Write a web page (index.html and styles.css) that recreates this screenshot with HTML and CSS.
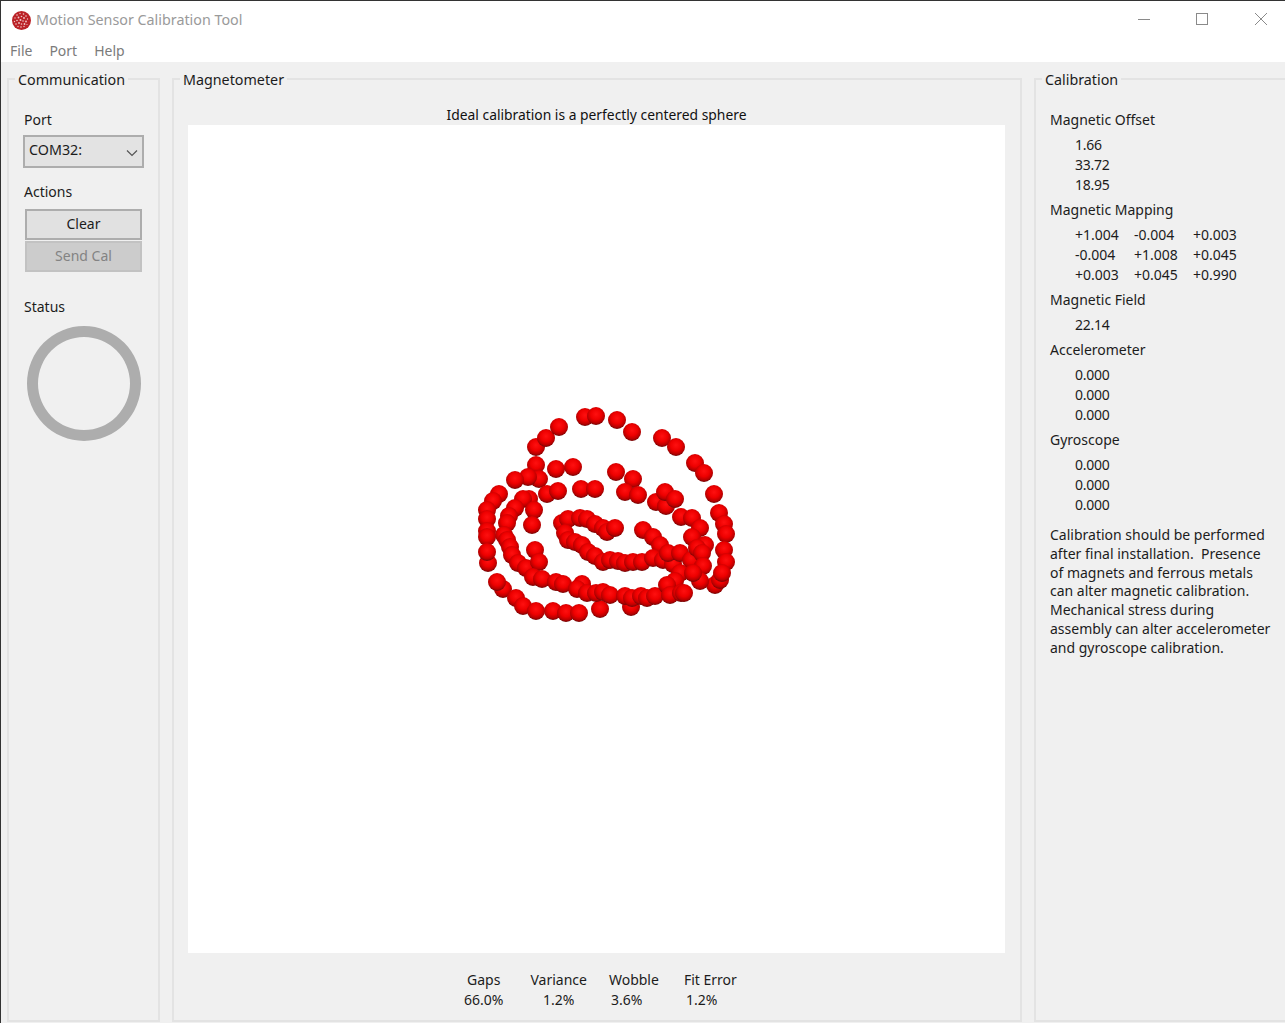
FILE: index.html
```html
<!DOCTYPE html>
<html lang="en">
<head>
<meta charset="utf-8">
<title>Motion Sensor Calibration Tool</title>
<link rel="stylesheet" href="styles.css">
</head>
<body>
<div class="window">
  <span class="edge-blue"></span>
  <span class="edge-red"></span>
  <header class="titlebar">
    <svg class="logo" width="21" height="21" viewBox="0 0 21 21">
      <circle cx="10.5" cy="10.5" r="9.5" fill="#bb2227"/>
      <g fill="#f0c8c8">
        <circle cx="6" cy="5" r=".8"/><circle cx="9" cy="3.5" r=".7"/><circle cx="12.5" cy="4" r=".8"/><circle cx="15" cy="6" r=".8"/>
        <circle cx="4" cy="8" r=".7"/><circle cx="7.5" cy="7.5" r=".9"/><circle cx="10.5" cy="6.5" r=".8"/><circle cx="13" cy="8" r=".9"/><circle cx="16.5" cy="9" r=".7"/>
        <circle cx="3.5" cy="11.5" r=".7"/><circle cx="6" cy="10.5" r=".8"/><circle cx="9.5" cy="10" r="1"/><circle cx="12" cy="11" r=".8"/><circle cx="15" cy="11.5" r=".9"/>
        <circle cx="5" cy="14" r=".8"/><circle cx="8" cy="13" r=".9"/><circle cx="10.5" cy="14" r=".8"/><circle cx="13.5" cy="14" r=".9"/><circle cx="16" cy="14.5" r=".6"/>
        <circle cx="7" cy="16.5" r=".7"/><circle cx="10" cy="17" r=".8"/><circle cx="13" cy="16.5" r=".7"/>
      </g>
    </svg>
    <span class="title">Motion Sensor Calibration Tool</span>
    <div class="controls">
      <svg class="ctl-min" width="14" height="14" viewBox="0 0 14 14"><path d="M1 7.5h12" stroke="#8a8a8a" fill="none"/></svg>
      <svg width="14" height="14" viewBox="0 0 14 14"><rect x="1.5" y="1.5" width="11" height="11" stroke="#8a8a8a" fill="none"/></svg>
      <svg width="14" height="14" viewBox="0 0 14 14"><path d="M1 1l12 12M13 1L1 13" stroke="#8a8a8a" fill="none"/></svg>
    </div>
  </header>
  <nav class="menubar"><span>File</span><span>Port</span><span>Help</span></nav>
  <main class="panels">
    <fieldset class="group group-comm">
      <legend>Communication</legend>
      <div class="label label-port">Port</div>
      <div class="select">COM32:
        <svg width="12" height="8" viewBox="0 0 12 8"><path d="M1 1.5l5 5 5-5" stroke="#555" stroke-width="1.2" fill="none"/></svg>
      </div>
      <div class="label label-actions">Actions</div>
      <button class="btn" type="button">Clear</button>
      <button class="btn btn-disabled" type="button">Send Cal</button>
      <div class="label label-status">Status</div>
      <div class="ring"></div>
    </fieldset>

    <fieldset class="group group-mag">
      <legend>Magnetometer</legend>
      <div class="caption">Ideal calibration is a perfectly centered sphere</div>
      <svg class="scene" width="817" height="828" viewBox="188 125 817 828">
        <defs>
          <radialGradient id="ball" cx="50%" cy="40%" r="60%">
            <stop offset="0" stop-color="#ff1010"/>
            <stop offset="0.5" stop-color="#ee0000"/>
            <stop offset="0.8" stop-color="#bb0000"/>
            <stop offset="0.96" stop-color="#800404"/>
            <stop offset="1" stop-color="#601010"/>
          </radialGradient>
          <circle id="d" r="9"/>
        </defs>
        <g fill="url(#ball)">
          <use href="#d" x="585" y="417"/><use href="#d" x="596" y="416"/><use href="#d" x="617" y="420"/><use href="#d" x="632" y="432"/>
          <use href="#d" x="536" y="447"/><use href="#d" x="546" y="438"/><use href="#d" x="559" y="427"/>
          <use href="#d" x="662" y="438"/><use href="#d" x="676" y="447"/><use href="#d" x="695" y="463"/><use href="#d" x="704" y="473"/>
          <use href="#d" x="536" y="465"/><use href="#d" x="556" y="469"/><use href="#d" x="573" y="467"/><use href="#d" x="616" y="472"/><use href="#d" x="633" y="479"/>
          <use href="#d" x="539" y="479"/><use href="#d" x="528" y="477"/><use href="#d" x="515" y="480"/>
          <use href="#d" x="547" y="494"/><use href="#d" x="558" y="491"/><use href="#d" x="581" y="489"/><use href="#d" x="595" y="489"/><use href="#d" x="625" y="492"/><use href="#d" x="638" y="495"/>
          <use href="#d" x="656" y="502"/><use href="#d" x="666" y="506"/><use href="#d" x="665" y="492"/><use href="#d" x="675" y="499"/><use href="#d" x="714" y="494"/>
          <use href="#d" x="499" y="494"/><use href="#d" x="493" y="501"/><use href="#d" x="487" y="510"/><use href="#d" x="487" y="519"/><use href="#d" x="487" y="531"/><use href="#d" x="487" y="537"/>
          <use href="#d" x="488" y="563"/><use href="#d" x="487" y="552"/>
          <use href="#d" x="529" y="499"/><use href="#d" x="523" y="499"/><use href="#d" x="515" y="508"/><use href="#d" x="509" y="516"/><use href="#d" x="507" y="523"/>
          <use href="#d" x="534" y="510"/><use href="#d" x="532" y="525"/>
          <use href="#d" x="504" y="535"/><use href="#d" x="507" y="540"/><use href="#d" x="510" y="547"/><use href="#d" x="512" y="555"/><use href="#d" x="518" y="563"/><use href="#d" x="526" y="568"/>
          <use href="#d" x="535" y="550"/><use href="#d" x="539" y="562"/><use href="#d" x="533" y="577"/><use href="#d" x="542" y="579"/><use href="#d" x="556" y="582"/><use href="#d" x="563" y="584"/>
          <use href="#d" x="503" y="589"/><use href="#d" x="497" y="582"/><use href="#d" x="516" y="598"/><use href="#d" x="523" y="606"/><use href="#d" x="536" y="611"/><use href="#d" x="553" y="611"/><use href="#d" x="566" y="613"/><use href="#d" x="579" y="613"/><use href="#d" x="600" y="609"/>
          <use href="#d" x="582" y="584"/><use href="#d" x="577" y="589"/><use href="#d" x="587" y="593"/><use href="#d" x="596" y="593"/><use href="#d" x="603" y="592"/><use href="#d" x="610" y="595"/>
          <use href="#d" x="631" y="607"/><use href="#d" x="625" y="596"/><use href="#d" x="632" y="598"/><use href="#d" x="641" y="596"/><use href="#d" x="647" y="598"/><use href="#d" x="655" y="596"/>
          <use href="#d" x="562" y="523"/><use href="#d" x="568" y="519"/><use href="#d" x="580" y="518"/><use href="#d" x="587" y="519"/><use href="#d" x="595" y="524"/><use href="#d" x="603" y="528"/><use href="#d" x="607" y="532"/><use href="#d" x="615" y="528"/>
          <use href="#d" x="565" y="533"/><use href="#d" x="568" y="540"/><use href="#d" x="575" y="542"/><use href="#d" x="582" y="545"/><use href="#d" x="588" y="552"/><use href="#d" x="595" y="556"/>
          <use href="#d" x="603" y="562"/><use href="#d" x="610" y="560"/><use href="#d" x="618" y="561"/><use href="#d" x="625" y="563"/><use href="#d" x="633" y="562"/><use href="#d" x="642" y="562"/>
          <use href="#d" x="643" y="530"/><use href="#d" x="653" y="537"/><use href="#d" x="660" y="545"/><use href="#d" x="653" y="558"/><use href="#d" x="663" y="560"/><use href="#d" x="673" y="564"/><use href="#d" x="668" y="553"/><use href="#d" x="680" y="553"/><use href="#d" x="691" y="560"/>
          <use href="#d" x="681" y="517"/><use href="#d" x="692" y="518"/><use href="#d" x="700" y="528"/><use href="#d" x="692" y="537"/><use href="#d" x="705" y="545"/><use href="#d" x="697" y="548"/><use href="#d" x="702" y="553"/>
          <use href="#d" x="719" y="513"/><use href="#d" x="724" y="524"/><use href="#d" x="726" y="534"/><use href="#d" x="724" y="550"/><use href="#d" x="726" y="562"/>
          <use href="#d" x="715" y="585"/><use href="#d" x="720" y="580"/><use href="#d" x="722" y="573"/><use href="#d" x="703" y="566"/>
          <use href="#d" x="680" y="573"/><use href="#d" x="700" y="581"/><use href="#d" x="693" y="573"/><use href="#d" x="675" y="581"/><use href="#d" x="667" y="585"/><use href="#d" x="670" y="595"/><use href="#d" x="681" y="593"/><use href="#d" x="684" y="593"/>
        </g>
      </svg>
      <div class="stats">
        <div class="stat stat-gaps"><div>Gaps</div><div>66.0%</div></div>
        <div class="stat"><div>Variance</div><div>1.2%</div></div>
        <div class="stat stat-left stat-wobble"><div>Wobble</div><div>3.6%</div></div>
        <div class="stat stat-left"><div>Fit Error</div><div>1.2%</div></div>
      </div>
    </fieldset>

    <fieldset class="group group-cal">
      <legend>Calibration</legend>
      <div class="heading">Magnetic Offset</div>
      <div class="values"><div>1.66</div><div>33.72</div><div>18.95</div></div>
      <div class="heading">Magnetic Mapping</div>
      <div class="matrix">
        <span>+1.004</span><span>-0.004</span><span>+0.003</span>
        <span>-0.004</span><span>+1.008</span><span>+0.045</span>
        <span>+0.003</span><span>+0.045</span><span>+0.990</span>
      </div>
      <div class="heading">Magnetic Field</div>
      <div class="values"><div>22.14</div></div>
      <div class="heading">Accelerometer</div>
      <div class="values"><div>0.000</div><div>0.000</div><div>0.000</div></div>
      <div class="heading">Gyroscope</div>
      <div class="values"><div>0.000</div><div>0.000</div><div>0.000</div></div>
      <p class="note">Calibration should be performed<br>after final installation.&nbsp; Presence<br>of magnets and ferrous metals<br>can alter magnetic calibration.<br>Mechanical stress during<br>assembly can alter accelerometer<br>and gyroscope calibration.</p>
    </fieldset>
  </main>
</div>
</body>
</html>
```
FILE: styles.css
```css
* { box-sizing: border-box; }
html, body { margin: 0; padding: 0; height: 100%; overflow: hidden; }
body {
  font-family: "Noto Sans", "Open Sans", sans-serif;
  font-size: 14px;
  line-height: 20px;
  color: #1c1c1c;
  background: #f0f0f0;
}
.window {
  position: relative;
  width: 1285px;
  height: 1023px;
  display: flex;
  flex-direction: column;
  border-left: 1px solid #333;
  border-top: 1px solid #333;
  overflow: hidden;
}
.edge-blue {
  position: absolute;
  left: -1px;
  top: 42px;
  width: 1px;
  height: 51px;
  background: #1a5a8a;
}
.edge-red {
  position: absolute;
  left: 807px;
  top: -1px;
  width: 60px;
  height: 1px;
  background: #e81123;
}
.titlebar {
  height: 38px;
  flex: none;
  display: flex;
  align-items: center;
  background: #fff;
  padding: 0 0 0 10px;
}
.logo { flex: none; }
.title {
  margin-left: 4px;
  color: #9a9a9a;
  font-size: 14.3px;
}
.controls {
  margin-left: auto;
  margin-top: -2px;
  display: flex;
  gap: 45px;
  padding-right: 17px;
}
.controls svg { display: block; }
.controls .ctl-min { margin: 0 -1px 0 1px; }
.menubar {
  height: 23px;
  flex: none;
  display: flex;
  align-items: center;
  gap: 17px;
  padding-left: 9px;
  background: #fff;
  color: #7b7b7b;
}
.panels {
  flex: 1;
  min-height: 0;
  display: flex;
  gap: 12px;
  padding: 7px 0 1px 6px;
  background: #f0f0f0;
}
.group {
  margin: 0;
  padding: 0;
  min-width: 0;
  border: 2px solid #e3e3e3;
  flex: none;
}
.group legend {
  margin-left: -8px;
  padding: 1px 3px 0;
  height: 20px;
  font-size: 14.3px;
}
.group-comm {
  width: 153px;
  display: flex;
  flex-direction: column;
  padding-left: 14px;
}
.label { height: 20px; padding-left: 1px; }
.label-port { margin-top: 21px; }
.label-actions { margin-top: 14px; }
.label-status { margin-top: 24px; }
.select {
  width: 121px;
  height: 33px;
  margin-top: 5px;
  padding: 3px 0 0 4px;
  border: 2px solid #adadad;
  background: #e3e3e3;
  position: relative;
  font-size: 14.3px;
}
.select svg { position: absolute; right: 4px; top: 12px; }
.btn {
  display: block;
  width: 117px;
  height: 31px;
  margin: 0 0 1px 2px;
  padding: 0 0 2px;
  border: 2px solid #adadad;
  background: #e1e1e1;
  color: #1c1c1c;
  font: inherit;
}
.label-actions + .btn { margin-top: 7px; }
.btn-disabled {
  border-color: #c2c2c2;
  background: #cccccc;
  color: #838383;
}
.ring {
  width: 114px;
  height: 115px;
  margin: 9px 0 0 4px;
  border: 11px solid #adadad;
  border-radius: 50%;
}
.group-mag {
  width: 850px;
  display: flex;
  flex-direction: column;
  padding-left: 14px;
}
.caption {
  width: 817px;
  height: 20px;
  margin-top: 16px;
  text-align: center;
  color: #111;
  font-size: 13.85px;
}
.scene {
  display: block;
  flex: none;
  background: #fff;
}
.stats {
  display: flex;
  gap: 22px;
  margin: 17px 0 0 276px;
}
.stat { text-align: center; }
.stat-gaps { margin-right: 5px; }
.stat-wobble { margin-right: 3px; }
.stat-left { text-align: left; }
.stat-left div + div { padding-left: 2px; }
.group-cal {
  width: 254px;
  padding-left: 14px;
}
.heading { height: 20px; }
.group-cal legend + .heading { margin-top: 21px; }
.values, .matrix { margin: 5px 0 5px 25px; }
.values { letter-spacing: -0.25px; }
.matrix {
  display: grid;
  grid-template-columns: repeat(3, 59px);
}
.note {
  margin: 11px 0 0;
  line-height: 18.8px;
  white-space: nowrap;
}
```
